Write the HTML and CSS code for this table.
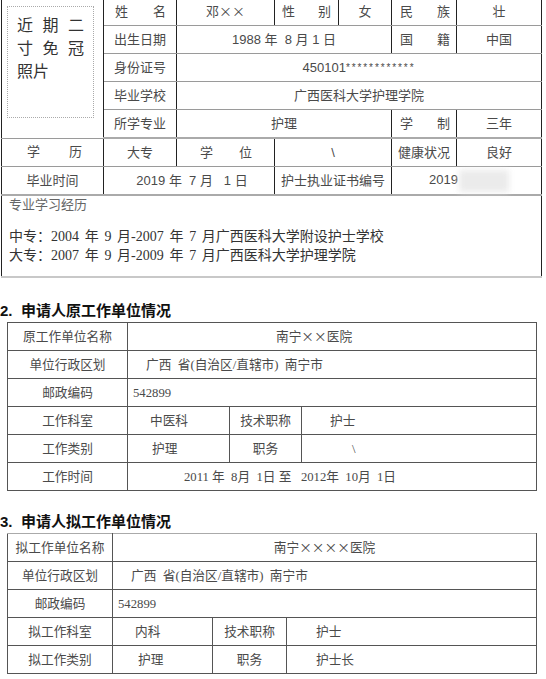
FILE: index.html
```html
<!DOCTYPE html>
<html lang="zh-CN">
<head>
<meta charset="utf-8">
<title>申请表</title>
<link rel="stylesheet" href="styles.css">
</head>
<body>
<table class="t1">
  <colgroup><col class="a1"><col class="a2"><col class="a3"><col class="a4"><col class="a5"><col class="a6"><col class="a7"></colgroup>
  <tr>
    <td rowspan="5" class="photo">
      <div class="pbox">
        <div class="pl">近期二</div>
        <div class="pl">寸免冠</div>
        <div class="pl3">照片</div>
      </div>
    </td>
    <td class="lab pn">姓名</td>
    <td><span class="cj">邓××</span></td>
    <td class="lab ps">性别</td>
    <td>女</td>
    <td class="lab pm">民族</td>
    <td>壮</td>
  </tr>
  <tr>
    <td>出生日期</td>
    <td colspan="3">1988 年&nbsp;&nbsp;8 月 1 日</td>
    <td class="lab pm">国籍</td>
    <td>中国</td>
  </tr>
  <tr>
    <td>身份证号</td>
    <td colspan="5">450101<span class="stars">************</span></td>
  </tr>
  <tr>
    <td>毕业学校</td>
    <td colspan="5">广西医科大学护理学院</td>
  </tr>
  <tr class="thick">
    <td>所学专业</td>
    <td colspan="3">护理</td>
    <td class="lab pm">学制</td>
    <td>三年</td>
  </tr>
  <tr>
    <td class="lab pxl">学历</td>
    <td>大专</td>
    <td class="lab pw">学位</td>
    <td colspan="2">\</td>
    <td>健康状况</td>
    <td>良好</td>
  </tr>
  <tr class="thick">
    <td>毕业时间</td>
    <td colspan="2" class="grad">2019 年&nbsp;&nbsp;7 月&nbsp;&nbsp;&nbsp;1 日</td>
    <td colspan="2">护士执业证书编号</td>
    <td colspan="2" class="lic">2019<span class="blur"></span></td>
  </tr>
  <tr>
    <td colspan="7" class="exp">
      <div class="eh">专业学习经历</div>
      <div class="el first">中专：2004 年 9 月-2007 年 7 月广西医科大学附设护士学校</div>
      <div class="el">大专：2007 年 9 月-2009 年 7 月广西医科大学护理学院</div>
    </td>
  </tr>
</table>

<h2 class="sec s2"><span class="num">2.</span>申请人原工作单位情况</h2>
<table class="t2">
  <colgroup><col class="b1"><col class="b2"><col class="b3"><col class="b4"></colgroup>
  <tr>
    <td>原工作单位名称</td>
    <td colspan="3" class="left p148"><span class="cj">南宁××医院</span></td>
  </tr>
  <tr>
    <td>单位行政区划</td>
    <td colspan="3" class="left p18">广西&nbsp;&nbsp;省(自治区/直辖市)&nbsp;&nbsp;南宁市</td>
  </tr>
  <tr>
    <td>邮政编码</td>
    <td colspan="3" class="left p5">542899</td>
  </tr>
  <tr>
    <td>工作科室</td>
    <td class="left p22">中医科</td>
    <td>技术职称</td>
    <td class="left p28">护士</td>
  </tr>
  <tr>
    <td>工作类别</td>
    <td class="left p24">护理</td>
    <td>职务</td>
    <td class="left p50">\</td>
  </tr>
  <tr>
    <td>工作时间</td>
    <td colspan="3" class="left p56">2011 年&nbsp;&nbsp;8月&nbsp;&nbsp;1日&nbsp;至&nbsp;&nbsp;&nbsp;2012年&nbsp;&nbsp;10月&nbsp;&nbsp;1日</td>
  </tr>
</table>

<h2 class="sec s3"><span class="num">3.</span>申请人拟工作单位情况</h2>
<table class="t2 t3">
  <colgroup><col class="c1"><col class="c2"><col class="c3"><col class="c4"></colgroup>
  <tr>
    <td>拟工作单位名称</td>
    <td colspan="3"><span class="cj">南宁××××医院</span></td>
  </tr>
  <tr>
    <td>单位行政区划</td>
    <td colspan="3" class="left p18">广西&nbsp;&nbsp;省(自治区/直辖市)&nbsp;&nbsp;南宁市</td>
  </tr>
  <tr>
    <td>邮政编码</td>
    <td colspan="3" class="left p5">542899</td>
  </tr>
  <tr>
    <td>拟工作科室</td>
    <td class="left p22">内科</td>
    <td>技术职称</td>
    <td class="left p29">护士</td>
  </tr>
  <tr>
    <td>拟工作类别</td>
    <td class="left p25">护理</td>
    <td>职务</td>
    <td class="left p29">护士长</td>
  </tr>
</table>
</body>
</html>
```

FILE: styles.css
```css
body {
  margin: 0;
  background: #fff;
  color: #4a4a4a;
  font-family: "Noto Sans CJK SC", sans-serif;
}

.cj { font-family: "Noto Sans CJK SC", sans-serif; }

/* ---------- table 1 ---------- */
.t1 {
  border-collapse: collapse;
  table-layout: fixed;
  width: 541px;
  margin: -3px 0 0 1px;
  font-family: "Liberation Sans", "Noto Sans CJK SC", sans-serif;
  font-size: 13px;
  line-height: 16px;
}
.a1 { width: 102px; }
.a2 { width: 73px; }
.a3 { width: 98px; }
.a4 { width: 64px; }
.a5 { width: 53px; }
.a6 { width: 65px; }
.a7 { width: 85px; }

.t1 td {
  height: 27px;
  padding: 0;
  text-align: center;
  vertical-align: middle;
  border-left: 1px solid #222;
  border-right: 1px solid #222;
  border-top: 1px solid #9a9a9a;
  border-bottom: 1px solid #9a9a9a;
  white-space: nowrap;
}
.t1 tr.thick td { border-bottom: 2px solid #aaa; }

.lab { text-align: justify !important; text-align-last: justify; }
.pn { padding: 0 10px 0 11px !important; }
.ps { padding: 0 7px !important; }
.pm { padding: 0 6px 0 8px !important; }
.pxl { padding: 0 21px 0 25px !important; }
.pw { padding: 0 22px 0 23px !important; }

.t1 td.photo {
  vertical-align: top;
  padding: 8px 0 0 5px;
}
.pbox {
  width: 87px;
  height: 112px;
  border: 1px dotted #aaa;
  padding: 7px 0 0 9px;
  box-sizing: border-box;
  font-size: 16px;
  line-height: 23px;
  color: #333;
}
.pl {
  width: 67px;
  text-align: justify;
  text-align-last: justify;
}
.pl3 { text-align: left; }

.stars {
  font-size: 10px;
  letter-spacing: 1.9px;
  vertical-align: 1px;
}
.t1 td.grad { padding-left: 6px; }
.t1 td.lic { text-align: left; padding-left: 37px; }
.blur {
  display: inline-block;
  width: 50px;
  height: 22px;
  background: #ebebeb;
  filter: blur(3px);
  vertical-align: middle;
  margin-left: 1px;
}

.t1 td.exp {
  height: 80px;
  vertical-align: top;
  text-align: left;
  padding: 0 8px 0 7px;
  border-bottom: 2px solid #c8c8c8;
  font-family: "Liberation Serif", "Noto Sans CJK SC", serif;
}
.eh {
  line-height: 13px;
  margin-top: 1px;
  color: #666;
  font-size: 13px;
  font-family: "Noto Sans CJK SC", sans-serif;
}
.el {
  line-height: 19px;
  font-size: 14px;
  word-spacing: 2.2px;
  color: #333;
}
.el.first { margin-top: 17px; }

/* ---------- section headers ---------- */
.sec {
  margin: 22px 0 0 0;
  font-family: "Liberation Sans", "Noto Sans CJK SC", sans-serif;
  font-weight: bold;
  font-size: 15px;
  line-height: 22px;
  color: #111;
}
.sec.s3 { margin-top: 20px; }
.num {
  display: inline-block;
  width: 21px;
}

/* ---------- tables 2, 3 ---------- */
.t2 {
  border-collapse: collapse;
  table-layout: fixed;
  width: 529px;
  margin-left: 7px;
  font-family: "Liberation Serif", "Noto Sans CJK SC", serif;
  font-size: 12.7px;
  line-height: 16px;
  color: #4a4a4a;
}
.b1 { width: 120px; }
.b2 { width: 102px; }
.b3 { width: 72px; }
.b4 { width: 235px; }
.c1 { width: 105px; }
.c2 { width: 100px; }
.c3 { width: 74px; }
.c4 { width: 250px; }

.t2 td {
  height: 27px;
  padding: 0;
  border: 1px solid #555;
  text-align: center;
  vertical-align: middle;
  white-space: nowrap;
}
.t3 tr:first-child td { border-top-color: #aaa; }

.t2 td.left { text-align: left; }
.t2 td.p5 { padding-left: 5px; }
.t2 td.p18 { padding-left: 18px; }
.t2 td.p22 { padding-left: 22px; }
.t2 td.p24 { padding-left: 24px; }
.t2 td.p25 { padding-left: 25px; }
.t2 td.p28 { padding-left: 28px; }
.t2 td.p29 { padding-left: 29px; }
.t2 td.p50 { padding-left: 50px; }
.t2 td.p56 { padding-left: 56px; }
.t2 td.p148 { padding-left: 148px; }
```
